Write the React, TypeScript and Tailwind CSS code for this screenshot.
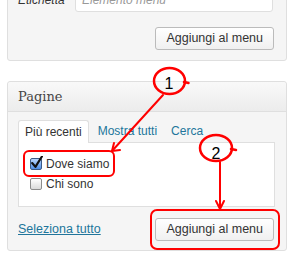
import React from 'react'

const Checkbox = ({ checked }: { checked?: boolean }) => {
    if (checked) {
        return (
            <span className="relative mr-[4px] inline-block h-[12px] w-[12px] rounded-[2px] border border-[#3b5a86] bg-gradient-to-b from-[#b9d6fb] to-[#4f8fe6]">
                <svg viewBox="0 0 12 12" className="absolute -left-[1px] -top-[3px] h-[13px] w-[13px]">
                    <path d="M2 6.5 L5 10 L11 0.5" fill="none" stroke="#111" strokeWidth="2" strokeLinecap="round" strokeLinejoin="round" />
                </svg>
            </span>
        )
    }
    return (
        <span className="mr-[4px] inline-block h-[12px] w-[12px] rounded-[2px] border border-[#8c8c8c] bg-gradient-to-b from-[#ffffff] to-[#dadada]" />
    )
}

const WpButton = ({ text }: { text: string }) => (
    <button className="h-[23px] rounded-[3px] border border-[#bbbbbb] bg-gradient-to-b from-[#ffffff] to-[#f0f0f0] px-[10px] text-[12.5px] leading-none text-[#333]">
        {text}
    </button>
)

// the red hand-drawn notes laid over the screenshot
const Annotations = () => (
    <svg className="pointer-events-none absolute left-0 top-0" width="294" height="259" viewBox="0 0 294 259">
        <g fill="none" stroke="#ff0000" strokeWidth="2" strokeLinecap="round" strokeLinejoin="round">
            <rect x="24" y="151" width="90" height="25" rx="5" />
            <rect x="151" y="210" width="128" height="39" rx="6" />
            <ellipse cx="169.5" cy="81" rx="15.5" ry="13" strokeWidth="2.5" />
            <ellipse cx="216" cy="148" rx="16" ry="13" strokeWidth="2.5" />
            <path d="M184 82 L188.5 83" strokeWidth="2.5" />
            <path d="M231 149 L236 150" strokeWidth="2.5" />
            <path d="M163 95 L112 151" />
            <path d="M114 143 L112 151 L120 150" />
            <path d="M220 162 L220 208" />
            <path d="M216 201 L220 209 L224 201" />
        </g>
        <text x="169" y="89" textAnchor="middle" fontSize="16" fontFamily="Liberation Sans, Arial, sans-serif" fill="#000">1</text>
        <text x="216" y="158.5" textAnchor="middle" fontSize="16" fontFamily="Liberation Sans, Arial, sans-serif" fill="#000">2</text>
    </svg>
)

export default function App() {
    return (
        <div className="relative h-[259px] w-[294px] overflow-hidden bg-white font-['Liberation_Sans',Arial,sans-serif]">
            {/* Etichetta panel, cut by the top edge */}
            <div className="-mt-[22px] ml-[7px] w-[280px] rounded-[3px] border border-[#dfdfdf] bg-[#f5f5f5] pb-[10px] pl-[10px] pr-[12px] pt-[9px]">
                <div className="flex items-center">
                    <span className="w-[57px] text-[12px] italic text-[#333]">Etichetta</span>
                    <div className="flex h-[24px] w-[198px] items-center rounded-[3px] border border-[#dfdfdf] bg-white pl-[6px] text-[12px] italic text-[#999]">
                        Elemento menu
                    </div>
                </div>
                <div className="mt-[15px] flex justify-end">
                    <WpButton text="Aggiungi al menu" />
                </div>
            </div>

            {/* Pagine panel */}
            <div className="ml-[7px] mt-[20px] w-[280px] rounded-[3px] border border-[#dfdfdf] bg-[#f5f5f5]">
                <div className="flex h-[30px] items-center rounded-t-[3px] border-b border-[#dfdfdf] bg-gradient-to-b from-[#f9f9f9] to-[#ececec] px-[10px]">
                    <span className="font-['DejaVu_Serif',Georgia,serif] text-[13px] text-[#464646]">Pagine</span>
                </div>
                <div className="pb-[9px] pl-[10px] pr-[11px] pt-[8px]">
                    <div className="flex items-end text-[12px]">
                        <span className="relative z-10 -mb-[1px] flex h-[23px] items-center rounded-t-[3px] border border-b-0 border-[#dfdfdf] bg-white px-[6px] text-[#333]">
                            Più recenti
                        </span>
                        <span className="flex h-[22px] items-center pl-[9px] text-[#21759b]">Mostra tutti</span>
                        <span className="flex h-[22px] items-center pl-[14px] text-[#21759b]">Cerca</span>
                    </div>
                    <div className="border border-[#dfdfdf] bg-white pb-[12px] pl-[11px] pt-[11px] text-[12px] text-[#333]">
                        <div className="flex h-[20px] items-center">
                            <Checkbox checked />
                            <span>Dove siamo</span>
                        </div>
                        <div className="flex h-[20px] items-center">
                            <Checkbox />
                            <span>Chi sono</span>
                        </div>
                    </div>
                    <div className="mt-[11px] flex items-center justify-between pr-[1px]">
                        <a className="text-[12.5px] text-[#21759b] underline">Seleziona tutto</a>
                        <WpButton text="Aggiungi al menu" />
                    </div>
                </div>
            </div>

            <Annotations />
        </div>
    )
}
